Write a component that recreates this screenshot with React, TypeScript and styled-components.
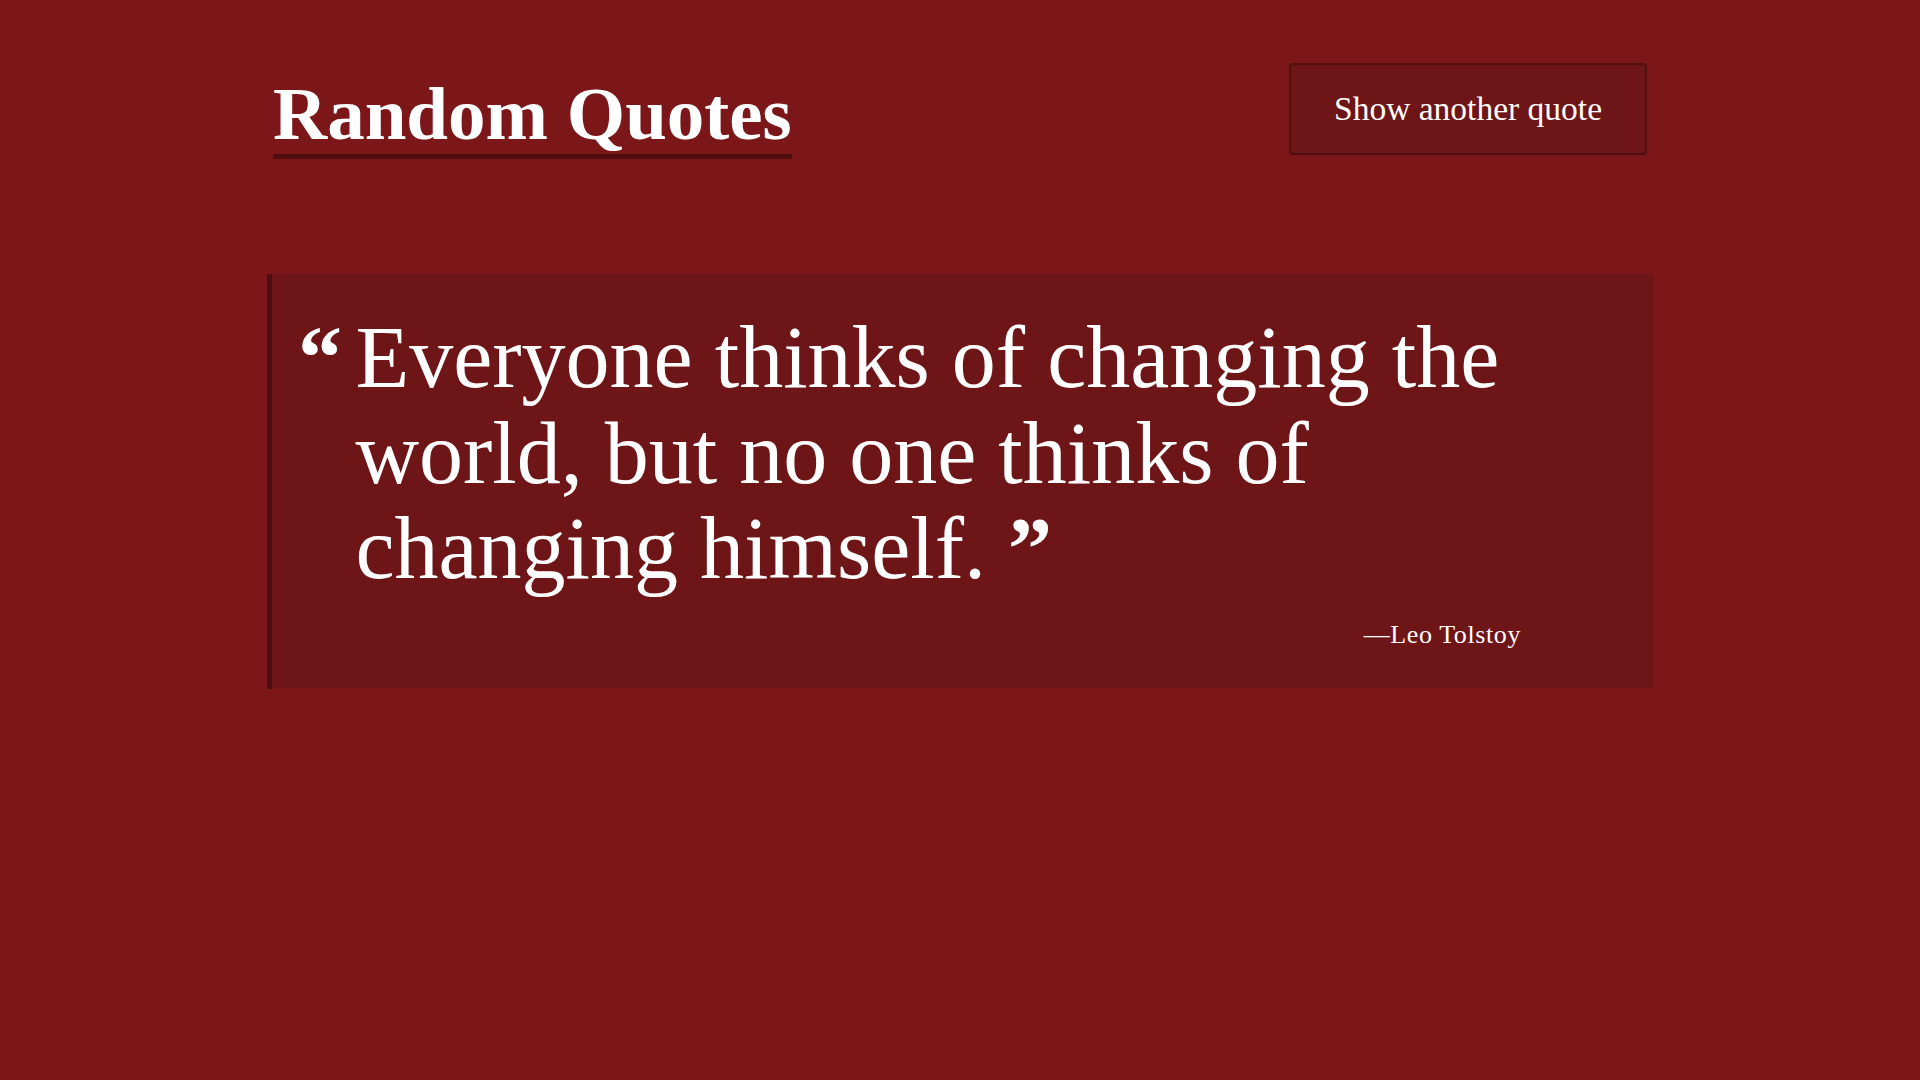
import React from "react";
import styled, { createGlobalStyle } from "styled-components";

const GlobalStyle = createGlobalStyle`
  html, body {
    margin: 0;
    padding: 0;
    background: #7b1719;
  }
  body {
    color: #ffffff;
    font-family: "Liberation Serif", "Times New Roman", serif;
    min-height: 1080px;
  }
  * { box-sizing: border-box; }
`;

const Page = styled.main`
  width: 1386px;
  margin: 0 auto;
`;

const Header = styled.header`
  display: flex;
  justify-content: space-between;
  align-items: flex-start;
  padding: 63px 6px 0 6px;
`;

const Title = styled.h1`
  display: inline-block;
  margin: 13px 0 0 0;
  padding: 0 0 3px 0;
  font-size: 75px;
  line-height: 75px;
  font-weight: 700;
  border-bottom: 5px solid #4e0e10;
`;

const NextButton = styled.button`
  height: 92px;
  padding: 0 43px;
  font-family: "Liberation Serif", "Times New Roman", serif;
  font-size: 33.5px;
  line-height: 40px;
  color: #ffffff;
  background: #6d1517;
  border: 2px solid #520f10;
  border-radius: 4px;
  cursor: pointer;
`;

const QuoteCard = styled.section`
  margin-top: 115px;
  background: #6d1517;
  border-left: 5px solid #4e0e10;
  border-radius: 0 4px 4px 0;
  padding: 36px 100px 35px 26px;
`;

const QuoteBody = styled.blockquote`
  margin: 0;
  display: flex;
  align-items: baseline;
  font-size: 88px;
  line-height: 95.5px;
`;

const OpenMark = styled.span`
  flex: 0 0 57.5px;
  font-weight: 700;
`;

const QuoteText = styled.p`
  flex: 1;
  margin: 0;
  font-weight: 400;
`;

const CloseMark = styled.span`
  display: inline-block;
  line-height: 60px;
  font-weight: 700;
`;

const Author = styled.p`
  margin: 18px 32px 0 0;
  text-align: right;
  font-size: 26px;
  line-height: 39px;
  letter-spacing: 0.6px;
`;

export default function App() {
  return (
    <>
      <GlobalStyle />
      <Page>
        <Header>
          <Title>Random Quotes</Title>
          <NextButton type="button">Show another quote</NextButton>
        </Header>
        <QuoteCard>
          <QuoteBody>
            <OpenMark>“</OpenMark>
            <QuoteText>
              Everyone thinks of changing the world, but no one thinks of
              changing himself. <CloseMark>”</CloseMark>
            </QuoteText>
          </QuoteBody>
          <Author>—Leo Tolstoy</Author>
        </QuoteCard>
      </Page>
    </>
  );
}
